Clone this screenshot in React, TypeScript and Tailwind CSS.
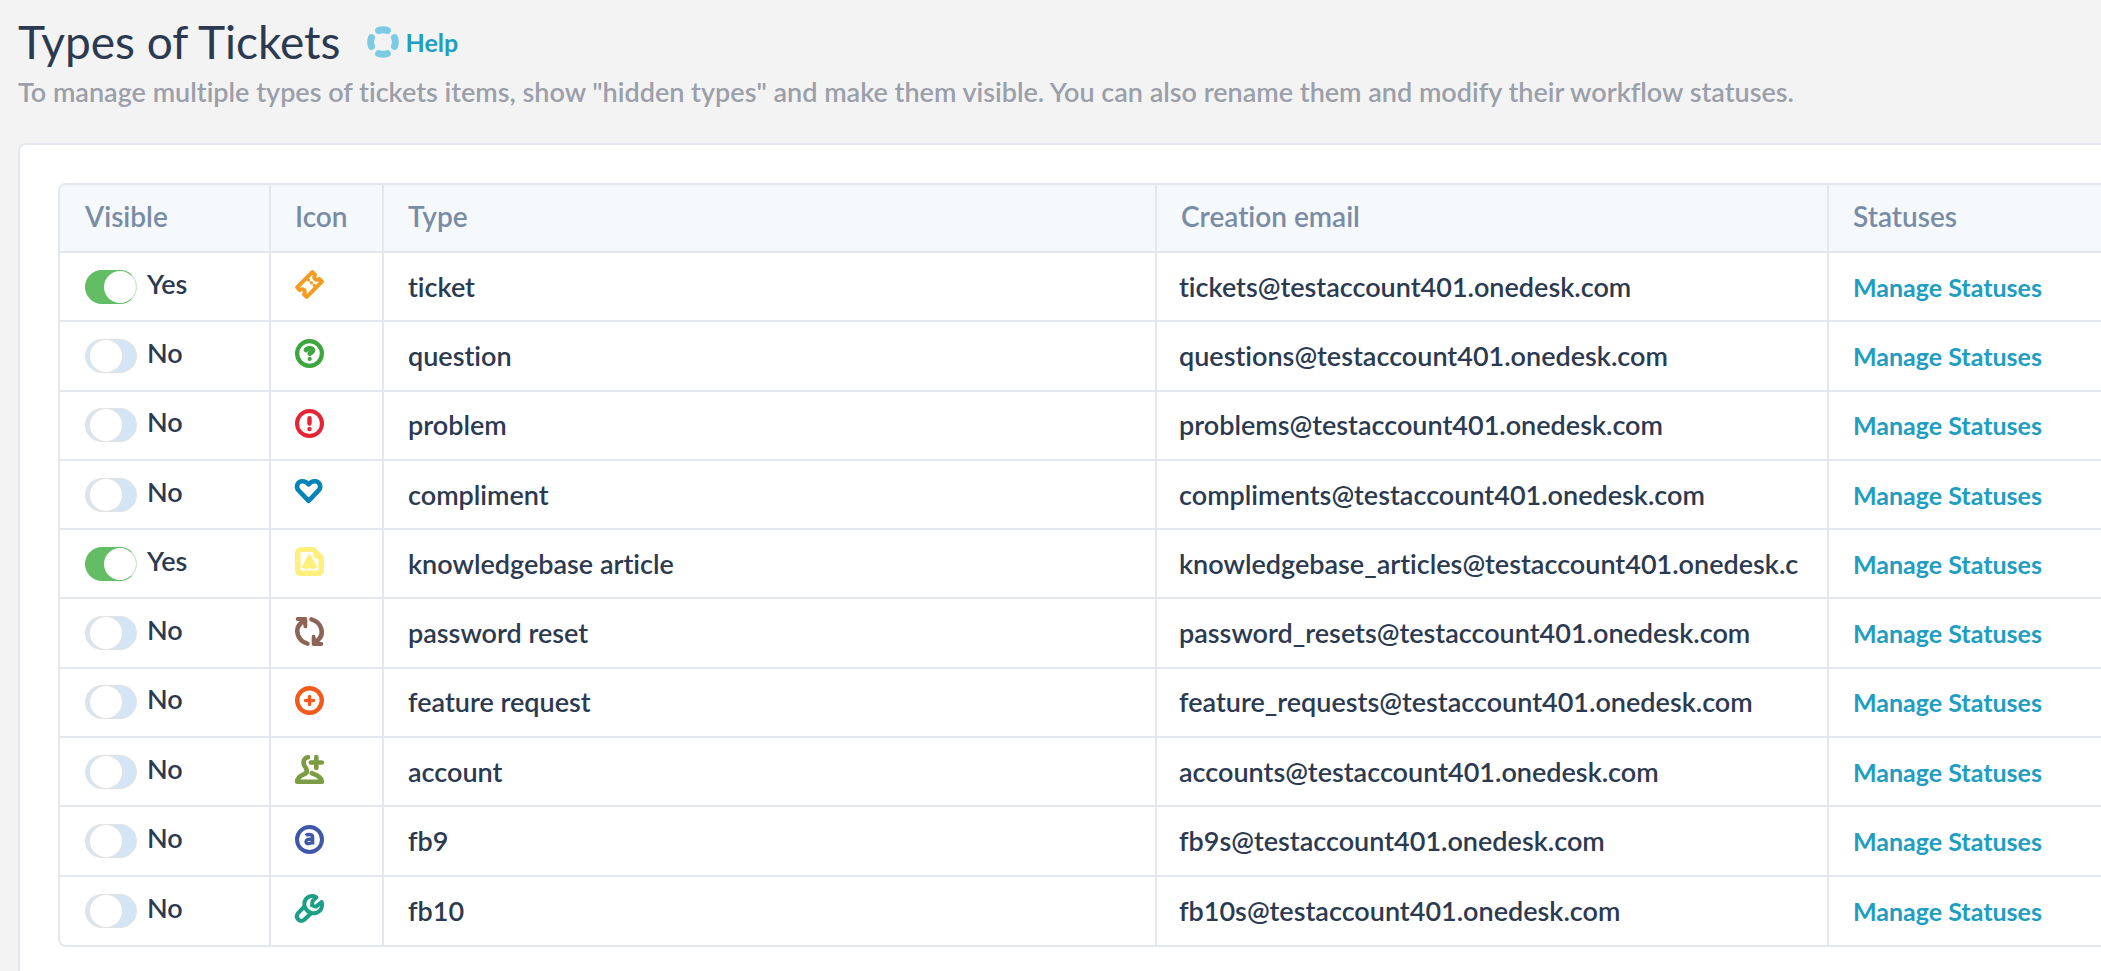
import { useState } from "react";
import type { ReactNode } from "react";

type IconName =
  | "ticket"
  | "question"
  | "problem"
  | "heart"
  | "article"
  | "reset"
  | "plus"
  | "account"
  | "letter"
  | "wrench";

type TicketType = {
  name: string;
  visible: boolean;
  icon: IconName;
  email: string;
};

const DOMAIN = "testaccount401.onedesk.com";

const INITIAL_TYPES: TicketType[] = [
  { name: "ticket", visible: true, icon: "ticket", email: `tickets@${DOMAIN}` },
  { name: "question", visible: false, icon: "question", email: `questions@${DOMAIN}` },
  { name: "problem", visible: false, icon: "problem", email: `problems@${DOMAIN}` },
  { name: "compliment", visible: false, icon: "heart", email: `compliments@${DOMAIN}` },
  { name: "knowledgebase article", visible: true, icon: "article", email: `knowledgebase_articles@testaccount401.onedesk.c` },
  { name: "password reset", visible: false, icon: "reset", email: `password_resets@${DOMAIN}` },
  { name: "feature request", visible: false, icon: "plus", email: `feature_requests@${DOMAIN}` },
  { name: "account", visible: false, icon: "account", email: `accounts@${DOMAIN}` },
  { name: "fb9", visible: false, icon: "letter", email: `fb9s@${DOMAIN}` },
  { name: "fb10", visible: false, icon: "wrench", email: `fb10s@${DOMAIN}` },
];

const ICONS: Record<IconName, { color: string; art: ReactNode }> = {
  ticket: {
    color: "text-[#f59b23]",
    art: (
      <g transform="translate(14.5 14.5) rotate(-45)">
        <path d="M-10.8 -6.8H10.8V-3A3 3 0 0 0 10.8 3V6.8H-10.8V3A3 3 0 0 0 -10.8 -3Z" strokeWidth="4" />
        <path d="M2.6 -4V4" strokeWidth="3.2" strokeDasharray="0.2 3.8" />
      </g>
    ),
  },
  question: {
    color: "text-[#3da63f]",
    art: (
      <>
        <circle cx="14.5" cy="14.5" r="12.4" strokeWidth="4.2" />
        <path d="M10.9 11Q11.8 9.4 14.6 9.4Q18 9.4 18 11.6Q18 13.2 14.8 14.2V14.8" strokeWidth="4.6" />
        <path d="M14.7 19.9V20" strokeWidth="4.2" />
      </>
    ),
  },
  problem: {
    color: "text-[#e82434]",
    art: (
      <>
        <circle cx="14.5" cy="14.5" r="12.5" strokeWidth="4" />
        <path d="M14.5 9.2V14.6M14.5 19.9V20" strokeWidth="4.4" />
      </>
    ),
  },
  heart: {
    color: "text-[#0284b8]",
    art: (
      <path d="M13.6 22.8L3.6 12.4C0.4 8.8 2.4 3.8 6.8 3.3C9.6 3 11.9 4.3 13.6 6.4C15.3 4.3 17.6 3 20.4 3.3C24.8 3.8 26.8 8.8 23.6 12.4Z" strokeWidth="4.6" />
    ),
  },
  article: {
    color: "text-[#ffef7d]",
    art: (
      <>
        <path fill="currentColor" stroke="none" fillRule="evenodd" d="M6 0H19.5L29 9.5V23.5A5.5 5.5 0 0 1 23.5 29H5.5A5.5 5.5 0 0 1 0 23.5V6A6 6 0 0 1 6 0ZM5.5 5V23.5H23.5V12.2L18.8 10.5L18 5Z" />
        <path fill="currentColor" d="M8.3 19.8L14.3 8.8L20.6 19.8L17.8 20.6H11.2Z" strokeWidth="2.8" />
        <path d="M12.8 22.2H16.2" stroke="white" strokeWidth="1.4" />
      </>
    ),
  },
  reset: {
    color: "text-[#8d6557]",
    art: (
      <>
        <path d="M12.5 26.6C2 23.5 -0.8 12 6 6" strokeWidth="4.6" />
        <path d="M2.6 2H10.4V9.4" strokeWidth="3.8" />
        <path fill="currentColor" d="M5 3H10V8Z" strokeWidth="2" />
        <path d="M16.5 2.4C27 5.5 29.8 17 23 23" strokeWidth="4.6" />
        <path d="M26.4 27H18.6V19.6" strokeWidth="3.8" />
        <path fill="currentColor" d="M24 26H19V21Z" strokeWidth="2" />
      </>
    ),
  },
  plus: {
    color: "text-[#f25b1c]",
    art: (
      <>
        <circle cx="14.5" cy="14.5" r="12.3" strokeWidth="4.4" />
        <path d="M14.5 10.5V18.5M10.5 14.5H18.5" strokeWidth="3.4" />
      </>
    ),
  },
  account: {
    color: "text-[#7c9c43]",
    art: (
      <>
        <path d="M13 2.2C8.8 3 7.8 6.5 9.2 10.5Q12 13.4 11.8 17.2C10 20.2 2.4 19.6 2.1 26.7H26.9C26.6 21.5 21.6 20.4 16.8 18.2" strokeWidth="4.6" />
        <path d="M21.3 2V13M15.8 7.5H26.8" strokeWidth="4.6" />
      </>
    ),
  },
  letter: {
    color: "text-[#3f57aa]",
    art: (
      <>
        <circle cx="14.5" cy="14.5" r="12.5" strokeWidth="4" />
        <path d="M10.8 10.5C12.6 9 17.6 8.8 17.6 12V19.6M17.6 14C13.2 13.7 11 14.8 11 16.8C11 19.4 15.4 19.2 17.6 16.8" strokeWidth="3.4" strokeLinecap="butt" />
      </>
    ),
  },
  wrench: {
    color: "text-[#1c9f86]",
    art: (
      <>
        <path d="M21.4 3.2C14.6 -0.4 8.2 5 9.5 12.4L2.8 19.4C-0.2 23.4 4.6 29 9.2 25.8L16.4 19C23.8 20.6 28.4 14.4 26.7 8L21 12.6L17 11.4L17.6 7.2Z" strokeWidth="4" />
        <path d="M10 13.2Q11.6 17.4 15.8 18.6" strokeWidth="4" />
      </>
    ),
  },
};

function TypeIcon({ name }: { name: IconName }) {
  const { color, art } = ICONS[name];
  return (
    <svg
      viewBox="0 0 29 29"
      aria-hidden="true"
      className={`mb-1 block size-[29px] overflow-visible ${color}`}
      fill="none"
      stroke="currentColor"
      strokeWidth="3.6"
      strokeLinecap="round"
      strokeLinejoin="round"
    >
      {art}
    </svg>
  );
}

function HelpIcon() {
  return (
    <svg viewBox="-16 -16 32 32" aria-hidden="true" className="size-8 text-[#7acbe3]" fill="none" stroke="currentColor" strokeWidth="7" strokeLinecap="round">
      <path d="M-4.4 -11.5A12.3 12.3 0 0 1 4.4 -11.5" />
      <path d="M11.5 -4.4A12.3 12.3 0 0 1 11.5 4.4" />
      <path d="M4.4 11.5A12.3 12.3 0 0 1 -4.4 11.5" />
      <path d="M-11.5 4.4A12.3 12.3 0 0 1 -11.5 -4.4" />
    </svg>
  );
}

function VisibleToggle({ checked, onChange }: { checked: boolean; onChange: () => void }) {
  return (
    <label className="flex cursor-pointer items-center gap-[10px]">
      <input
        type="checkbox"
        checked={checked}
        onChange={onChange}
        className="flex h-[34px] w-[52px] shrink-0 cursor-pointer appearance-none items-center rounded-full border border-[#e2e2e2] bg-[#d4e6f5] pl-1 before:block before:size-8 before:rounded-full before:bg-white before:shadow-[0_0_0_1px_#e2e2e2] checked:border-[#63bd64] checked:bg-[#63bd64] checked:border-r-[#d5e5d5] checked:pl-[18px] checked:before:shadow-none"
      />
      <span className="pb-1.5">{checked ? "Yes" : "No"}</span>
    </label>
  );
}

export default function App() {
  const [types, setTypes] = useState(INITIAL_TYPES);

  const toggle = (index: number) =>
    setTypes((current) =>
      current.map((type, i) => (i === index ? { ...type, visible: !type.visible } : type)),
    );

  return (
    <main className="flex h-screen flex-col overflow-hidden bg-[#f3f3f3] pl-[18px] font-[Lato,sans-serif] text-[27px] leading-8 font-semibold text-[#2b3a50] [font-variant-ligatures:none]">
      <header className="pt-[14px]">
        <div className="flex items-center gap-[26px]">
          <h1 className="text-[46px] leading-[56px] font-normal">Types of Tickets</h1>
          <a href="#help" className="flex items-center gap-[7px] text-[25px] font-bold text-[#219dc1]">
            <HelpIcon />
            Help
          </a>
        </div>
        <p className="mt-[6px] text-[#9a9faa]">
          To manage multiple types of tickets items, show "hidden types" and make them visible. You can also rename them and modify their workflow statuses.
        </p>
      </header>

      <section className="mt-[35px] grow rounded-tl-lg border-t-2 border-l-2 border-[#e5e8ee] bg-white pt-[38px] pl-[38px]">
        <div className="overflow-hidden rounded-l-lg border-y-2 border-l-2 border-[#e4e7ed]">
          <table className="h-[760px] w-full table-fixed border-collapse text-left">
            <thead className="bg-[#f5f9fc] text-[28px] text-[#7a8ca5]">
              <tr className="h-[67px]">
                <th className="w-[210px] px-[25px] pb-1 font-semibold">Visible</th>
                <th className="w-[113px] border-l-2 border-[#e4e7ed] px-6 pb-1 font-semibold">Icon</th>
                <th className="border-l-2 border-[#e4e7ed] px-6 pb-1 font-semibold">Type</th>
                <th className="w-[672px] border-l-2 border-[#e4e7ed] px-6 pb-1 font-semibold">Creation email</th>
                <th className="w-[273px] border-l-2 border-[#e4e7ed] px-6 pb-1 font-semibold">Statuses</th>
              </tr>
            </thead>
            <tbody>
              {types.map((type, index) => (
                <tr key={type.name} className="h-[69px] border-t-2 border-[#e4e7ed]">
                  <td className="px-[25px]">
                    <VisibleToggle checked={type.visible} onChange={() => toggle(index)} />
                  </td>
                  <td className="border-l-2 border-[#e4e7ed] px-6">
                    <TypeIcon name={type.icon} />
                  </td>
                  <td className="border-l-2 border-[#e4e7ed] px-6">{type.name}</td>
                  <td className="overflow-hidden border-l-2 border-[#e4e7ed] pr-5 pl-[22px] whitespace-nowrap">{type.email}</td>
                  <td className="border-l-2 border-[#e4e7ed] px-6">
                    <a href="#statuses" className="text-[25px] font-bold whitespace-nowrap text-[#219dc1]">
                      Manage Statuses
                    </a>
                  </td>
                </tr>
              ))}
            </tbody>
          </table>
        </div>
      </section>
    </main>
  );
}
